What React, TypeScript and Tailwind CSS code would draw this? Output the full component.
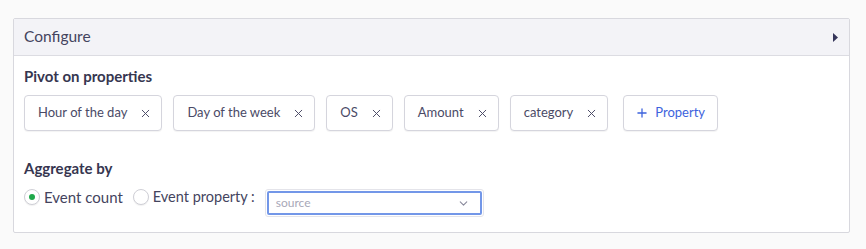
import { X, Plus, ChevronDown } from "lucide-react";

const properties = ["Hour of the day", "Day of the week", "OS", "Amount", "category"];

const Chip = ({ label }: { label: string }) => (
  <div className="h-[36px] flex items-center pl-[13px] pr-[9px] gap-[12px] bg-white border border-[#d5d5dd] rounded-[4px] shadow-[0_1px_1px_rgba(0,0,0,0.05)] text-[13px] text-[#4a4a66]">
    <span>{label}</span>
    <X size={13} strokeWidth={1.8} className="text-[#4a4a66]" />
  </div>
);

const Radio = ({ checked }: { checked?: boolean }) => (
  <span className="w-[16px] h-[16px] shrink-0 rounded-full border border-[#cfcfd6] bg-white flex items-center justify-center shadow-[0_1px_1px_rgba(0,0,0,0.06)]">
    {checked && <span className="w-[6px] h-[6px] rounded-full bg-[#1fa84a]" />}
  </span>
);

export default function App() {
  return (
    <div
      className="w-[866px] h-[249px] bg-[#fafafa] pt-[18px] pl-[13px] pr-[16px]"
      style={{ fontFamily: "Lato, 'Open Sans', sans-serif" }}
    >
      <div className="bg-white border border-[#d8d8de] rounded-[2px] h-[215px] flex flex-col">
        <div className="h-[37px] bg-[#f3f3f7] border-b border-[#dcdce2] flex items-center justify-between pl-[10px] pr-[11px]">
          <span className="text-[15.5px] text-[#44445e]">Configure</span>
          <svg width="5" height="9" viewBox="0 0 5 9">
            <path d="M0 0 L5 4.5 L0 9 Z" fill="#35355a" />
          </svg>
        </div>
        <div className="px-[10px] pt-[11px]">
          <div className="text-[15px] font-bold text-[#363650] leading-[18px]">Pivot on properties</div>
          <div className="flex items-center gap-[11px] mt-[10px]">
            {properties.map((p) => (
              <Chip key={p} label={p} />
            ))}
            <div className="ml-[4px] h-[36px] flex items-center gap-[6px] pl-[11px] pr-[12px] bg-white border border-[#d5d5dd] rounded-[4px] shadow-[0_1px_1px_rgba(0,0,0,0.05)] text-[13px] text-[#3d63dd]">
              <Plus size={14} strokeWidth={2.2} />
              <span>Property</span>
            </div>
          </div>
          <div className="text-[15px] font-bold text-[#363650] leading-[18px] mt-[28px]">Aggregate by</div>
          <div className="flex items-start mt-[12px] text-[15px] text-[#44445e] leading-[16px]">
            <Radio checked />
            <span className="ml-[4px]">Event count</span>
            <span className="ml-[10px]">
              <Radio />
            </span>
            <span className="ml-[4px] text-[14.5px]">Event property :</span>
            <div className="ml-[10px] p-[1px] rounded-[3px] border border-[#e4e4ea]">
              <div className="w-[215px] h-[24px] border-2 border-[#7397e8] rounded-[2px] flex items-center justify-between pl-[7px] pr-[10px] bg-white">
                <span className="text-[12px] text-[#a8a8b8]">source</span>
                <ChevronDown size={13} strokeWidth={2} className="text-[#8a8a9c]" />
              </div>
            </div>
          </div>
        </div>
      </div>
    </div>
  );
}
